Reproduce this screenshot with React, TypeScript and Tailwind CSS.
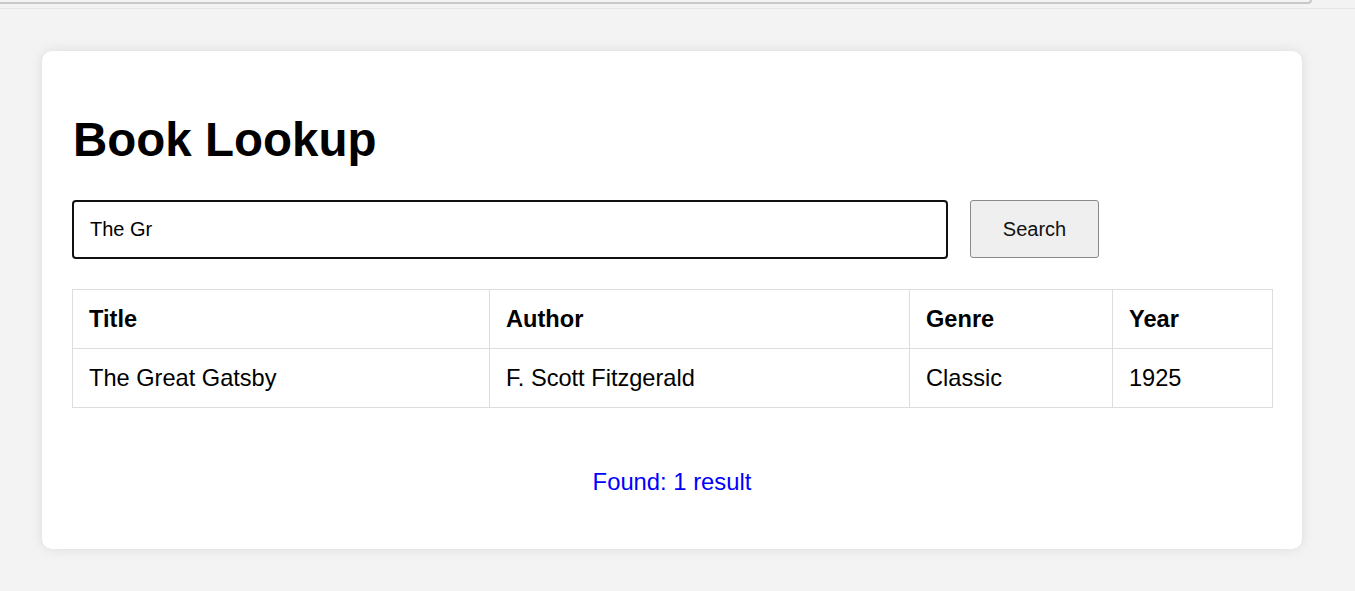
import React from 'react';

const books = [
  { title: 'The Great Gatsby', author: 'F. Scott Fitzgerald', genre: 'Classic', year: 1925 },
];

export default function App() {
  const [query, setQuery] = React.useState('The Gr');

  return (
    <div className="min-h-[591px] bg-[#f3f3f3] font-['Liberation_Sans',Arial,sans-serif] text-black">
      {/* edge of the frame above */}
      <div className="h-[9px] border-b border-[#e6e6e6]">
        <div className="h-[4px] w-[1312px] border-b-2 border-r-2 border-[#c9c9c9] rounded-br-[10px]" />
      </div>

      <div className="mx-[42px] mt-[42px] w-[1260px] bg-white rounded-[10px] shadow-[0_0_12px_rgba(0,0,0,0.1)] px-[30px] pt-[65px] pb-[56px]">
        <h1 className="text-[47.5px] leading-none font-bold ml-[1px]">Book Lookup</h1>

        <div className="flex items-start mt-[36px]">
          <input
            value={query}
            onChange={e => setQuery(e.target.value)}
            className="w-[876px] h-[59px] border-2 border-[#111] rounded-[4px] px-[16px] text-[20px] text-black outline-none"
          />
          <button className="ml-[22px] w-[129px] h-[58px] bg-[#efefef] border border-[#8a8a8a] rounded-[3px] text-[20px] text-[#111]">
            Search
          </button>
        </div>

        <table className="mt-[30px] w-[1200px] table-fixed border-collapse text-[23.6px]">
          <colgroup>
            <col className="w-[417px]" />
            <col className="w-[420px]" />
            <col className="w-[203px]" />
            <col className="w-[160px]" />
          </colgroup>
          <thead>
            <tr className="h-[59px]">
              {['Title', 'Author', 'Genre', 'Year'].map(h => (
                <th key={h} className="border border-[#dddddd] px-[16px] pt-[2px] text-left font-bold">{h}</th>
              ))}
            </tr>
          </thead>
          <tbody>
            {books.map(b => (
              <tr key={b.title} className="h-[59px]">
                <td className="border border-[#dddddd] px-[16px] pt-[2px]">{b.title}</td>
                <td className="border border-[#dddddd] px-[16px] pt-[2px]">{b.author}</td>
                <td className="border border-[#dddddd] px-[16px] pt-[2px]">{b.genre}</td>
                <td className="border border-[#dddddd] px-[16px] pt-[2px]">{b.year}</td>
              </tr>
            ))}
          </tbody>
        </table>

        <p className="mt-[62px] text-center text-[23.8px] leading-none text-[#0000ff]">
          Found: {books.length} result
        </p>
      </div>
    </div>
  );
}
